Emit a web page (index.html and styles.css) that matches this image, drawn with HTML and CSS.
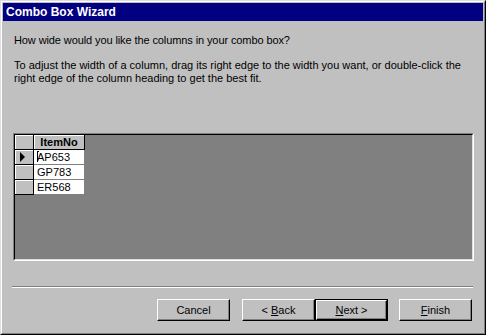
FILE: index.html
```html
<!DOCTYPE html>
<html>
<head>
<meta charset="utf-8">
<link rel="stylesheet" href="styles.css">
</head>
<body>
<div class="win">
  <div class="win-inner">
    <div class="titlebar">Combo Box Wizard</div>
    <div class="body">
      <p class="p1">How wide would you like the columns in your combo box?</p>
      <p class="p2">To adjust the width of a column, drag its right edge to the width you want, or double-click the<br>right edge of the column heading to get the best fit.</p>
      <div class="grid">
        <div class="grid-in">
          <table class="tbl">
            <tr><td class="sel hdr"></td><td class="colhdr">ItemNo</td></tr>
            <tr><td class="sel"><span class="arrow"></span></td><td class="cell cur">AP653<span class="caret"></span></td></tr>
            <tr><td class="sel"></td><td class="cell">GP783</td></tr>
            <tr><td class="sel"></td><td class="cell">ER568</td></tr>
          </table>
        </div>
      </div>
      <div class="sep"></div>
      <div class="buttons">
        <div class="btn"><span>Cancel</span></div>
        <div class="btn back"><span>&lt; <u>B</u>ack</span></div>
        <div class="btn def"><span class="def-in"><span><u>N</u>ext &gt;</span></span></div>
        <div class="btn finish"><span><u>F</u>inish</span></div>
      </div>
    </div>
  </div>
</div>
</body>
</html>
```

FILE: styles.css
```css
html, body {
  margin: 0;
  padding: 0;
  background: #c0c0c0;
}
.win {
  width: 486px;
  height: 335px;
  box-sizing: border-box;
  border: 1px solid;
  border-color: #dfdfdf #000 #000 #dfdfdf;
  background: #c0c0c0;
  font-family: "Liberation Sans", Arial, sans-serif;
  font-size: 11px;
  color: #000;
}
.win-inner {
  height: 100%;
  box-sizing: border-box;
  border: 1px solid;
  border-color: #fff #808080 #808080 #fff;
  padding: 1px;
}
.titlebar {
  height: 18px;
  background: #000080;
  color: #fff;
  font-weight: bold;
  font-size: 12px;
  line-height: 18px;
  padding-left: 3px;
}
.body {
  display: flex;
  flex-direction: column;
}
.p1, .p2 {
  margin: 0 0 0 11px;
  line-height: 13px;
  letter-spacing: -0.1px;
}
.p2 { letter-spacing: 0; }
.p1 { margin-top: 13px; }
.p2 { margin-top: 12px; }
.grid {
  margin: 48px 0 0 10px;
  width: 461px;
  height: 128px;
  box-sizing: border-box;
  border: 1px solid;
  border-color: #808080 #fff #fff #808080;
  background: #808080;
}
.grid-in {
  height: 100%;
  box-sizing: border-box;
  border: 1px solid;
  border-color: #000 #dfdfdf #dfdfdf #000;
}
.tbl {
  border-collapse: separate;
  border-spacing: 0;
}
.tbl td {
  padding: 0;
  height: 15px;
  line-height: 14px;
  box-sizing: border-box;
}
.sel {
  width: 19px;
  background: #c0c0c0;
  border-right: 1px solid #000;
  border-bottom: 1px solid #000;
  box-shadow: inset 1px 1px 0 #fff;
  position: relative;
}
.colhdr {
  width: 51px;
  background: #c0c0c0;
  font-weight: bold;
  text-align: center;
  border-right: 1px solid #000;
  border-bottom: 1px solid #000;
  box-shadow: inset 1px 1px 0 #fff;
}
.cell {
  background: #fff;
  border-right: 1px solid #808080;
  border-bottom: 1px solid #808080;
  padding-left: 3px !important;
}
.cur { position: relative; }
.arrow {
  position: absolute;
  left: 5px;
  top: 2px;
  width: 0;
  height: 0;
  border-top: 5px solid transparent;
  border-bottom: 5px solid transparent;
  border-left: 5px solid #000;
}
.caret {
  position: absolute;
  left: 3px;
  top: 1px;
  width: 1px;
  height: 11px;
  background: #000;
}
.caret::before {
  content: "";
  position: absolute;
  left: 0;
  top: 0;
  width: 2px;
  height: 1px;
  background: #000;
}
.sep {
  margin: 25px 0 0 9px;
  width: 461px;
  height: 2px;
  box-sizing: border-box;
  border-top: 1px solid #808080;
  border-bottom: 1px solid #fff;
}
.buttons {
  display: flex;
  margin: 11px 0 0 154px;
}
.btn {
  width: 73px;
  height: 22px;
  box-sizing: border-box;
  border: 1px solid;
  border-color: #fff #000 #000 #fff;
  box-shadow: inset -1px -1px 0 #808080;
  display: flex;
  align-items: center;
  justify-content: center;
  padding-bottom: 1px;
}
.back { margin-left: 12px; }
.finish { margin-left: 11px; }
.def {
  border: 1px solid #000;
  box-shadow: none;
  padding: 0;
}
.def-in {
  width: 100%;
  height: 100%;
  box-sizing: border-box;
  border: 1px solid;
  border-color: #fff #000 #000 #fff;
  box-shadow: inset -1px -1px 0 #808080;
  display: flex;
  align-items: center;
  justify-content: center;
  padding-bottom: 1px;
}
.btn span { white-space: pre; }
u { text-decoration: underline; text-underline-offset: 1px; }
```
